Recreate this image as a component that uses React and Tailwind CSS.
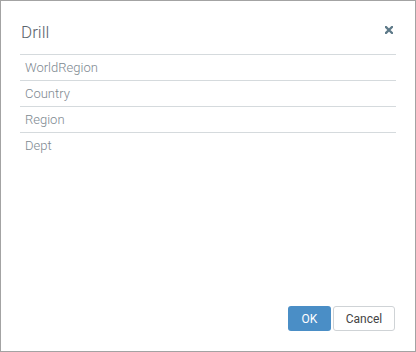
export default function App() {
  const rows = ["WorldRegion", "Country", "Region", "Dept"];
  return (
    <div
      className="w-[416px] h-[352px] bg-white border border-[#a3a3a3] flex flex-col box-border"
      style={{ fontFamily: "Roboto, 'Liberation Sans', sans-serif" }}
    >
      <div className="flex items-center justify-between pl-[20px] pr-[22px] pt-[19px] h-[53px] pb-[10px]">
        <div className="text-[17px] text-[#5a646b] leading-none font-light">Drill</div>
        <svg width="8" height="8" viewBox="0 0 8 8" className="mb-[5px]">
          <path d="M1 1 L7 7 M7 1 L1 7" stroke="#5e7a89" strokeWidth="2.3" strokeLinecap="square" />
        </svg>
      </div>
      <div className="mx-[19px] border-t border-[#d5dadd]">
        {rows.map((r) => (
          <div
            key={r}
            className="h-[26px] flex items-center pl-[5px] text-[13px] text-[#7d8890] font-light border-b border-[#d5dadd] last:border-b-0"
          >
            {r}
          </div>
        ))}
      </div>
      <div className="flex-1" />
      <div className="flex justify-end gap-[2px] pr-[20px] pb-[20px]">
        <button className="w-[43px] h-[25px] rounded-[3px] bg-[#4a8ec6] text-white text-[12px] flex items-center justify-center">
          OK
        </button>
        <button className="w-[62px] h-[25px] rounded-[3px] bg-white border border-[#cfd3d6] text-[#444] text-[12px] flex items-center justify-center">
          Cancel
        </button>
      </div>
    </div>
  );
}
